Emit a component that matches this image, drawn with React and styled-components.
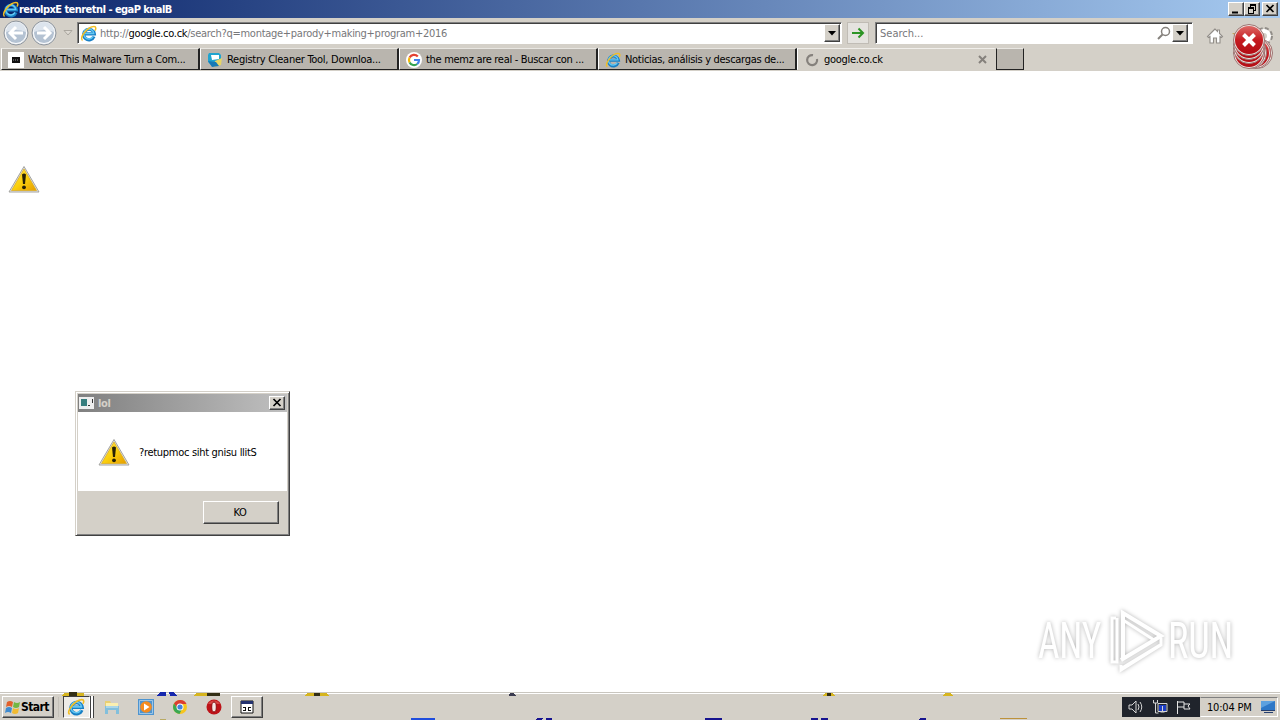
import React from "react";
import styled, { createGlobalStyle, css } from "styled-components";

const App = () => {
  return (
    <>
      <GlobalStyle />
      <Screen>
        <TitleBar>
          <IeLogo size={17} />
          <TitleText>rerolpxE tenretnI - egaP knalB</TitleText>
          <WindowButtons>
            <CaptionButton>
              <svg width="14" height="12"><path d="M3 9.5h6" stroke="#000" strokeWidth="2" /></svg>
            </CaptionButton>
            <CaptionButton>
              <svg width="14" height="12" fill="none" stroke="#000" shapeRendering="crispEdges">
                <path d="M5 2.5h6M5 1.5h6M5.5 2v3M10.5 2v5M9 7.5h2M3 5.5h6M3 4.5h6M3.5 5v5M8.5 5v5M3 10.5h6" />
              </svg>
            </CaptionButton>
            <CaptionButton $gap>
              <CloseGlyph />
            </CaptionButton>
          </WindowButtons>
        </TitleBar>

        <NavBar>
          <NavButtons>
            <NavArrow />
            <NavArrow forward />
            <svg width="10" height="8"><path d="M1 1.5h8L5 6z" fill="#ddd9d2" stroke="#aaa69f" /></svg>
          </NavButtons>
          <AddressField>
            <IeLogo size={17} />
            <Url>
              http://<b>google.co.ck</b>/search?q=montage+parody+making+program+2016
            </Url>
            <DropButton><DownGlyph /></DropButton>
          </AddressField>
          <GoButton>
            <svg width="14" height="12" fill="none" stroke="#2c9424" strokeWidth="2">
              <path d="M1 6h11M7.5 1.5L12 6l-4.500 4.500" />
            </svg>
          </GoButton>
          <SearchField>
            <SearchText>Search...</SearchText>
            <svg width="14" height="14" fill="none" stroke="#85817c">
              <circle cx="8.500" cy="5.500" r="4" strokeWidth="1.500" />
              <path d="M5.500 8.500L1 13" strokeWidth="2" />
            </svg>
            <DropButton><DownGlyph /></DropButton>
          </SearchField>
          <Tools>
            <svg width="18" height="18" fill="#fff" stroke="#918d88" strokeWidth="1.100">
              <path d="M9 2L1.500 9.500l1 1L4 9.500V16h3.500v-5h3v5H14V9.500l1.500 1 1-1-3-3V3h-2v1.500z" />
            </svg>
            <svg width="18" height="18" fill="#c5a55a"><path d="M9 1l2 5h6l-5 4 2 6-5-4-5 4 2-6-5-4h6z" /></svg>
            <svg width="18" height="18" fill="none">
              <circle cx="8" cy="9" r="6.500" stroke="#918d88" strokeWidth="5" strokeDasharray="3.200 1.900" />
              <circle cx="8" cy="9" r="5" stroke="#fff" strokeWidth="4" />
            </svg>
          </Tools>
        </NavBar>

        <TabBar>
          <Tab>
            <svg width="16" height="16"><path fill="#fff" d="M0 0h16v16H0z" /><path fill="#111" d="M4 5h8v6H4z" /><path d="M5 8h6" stroke="#999" strokeDasharray="1 1" /></svg>
            <TabText>Watch This Malware Turn a Com...</TabText>
          </Tab>
          <Tab>
            <svg width="16" height="16">
              <path d="M2 1h10l2 2v5l-2 5H4L1 10V3z" fill="#20a4cf" />
              <path d="M4 3h8v4L5 8z" fill="#fff" />
              <path d="M8 9l7-3-1 7-7 2z" fill="#e7d565" />
              <path d="M1 9l8 1 3 4-7 1z" fill="#1679b5" />
            </svg>
            <TabText $spacing={-0.27}>Registry Cleaner Tool, Downloa...</TabText>
          </Tab>
          <Tab>
            <svg width="16" height="16" fill="none" strokeWidth="2.200">
              <circle cx="8" cy="8" r="8" fill="#fff" />
              <path d="M11.800 4.500A5 5 0 0 0 3.600 5.600" stroke="#e34133" />
              <path d="M3.600 5.600a5 5 0 0 0 0 4.800" stroke="#f3b605" />
              <path d="M3.600 10.400a5 5 0 0 0 7.600 1.600" stroke="#32a350" />
              <path d="M11.200 12A5 5 0 0 0 13 8H8" stroke="#4081ec" />
            </svg>
            <TabText>the memz are real - Buscar con ...</TabText>
          </Tab>
          <Tab>
            <IeLogo size={16} />
            <TabText>Noticias, análisis y descargas de...</TabText>
          </Tab>
          <Tab $active>
            <svg width="16" height="16"><path d="M9 3.200A5 5 0 1 0 13 7" fill="none" stroke="#85817c" strokeWidth="2.200" /></svg>
            <TabText>google.co.ck</TabText>
            <svg width="9" height="9"><path d="M1 1l7 7M8 1L1 8" stroke="#85817c" strokeWidth="2" /></svg>
          </Tab>
          <NewTab />
        </TabBar>

        <Page />

        <Taskbar>
          <StartButton>
            <svg width="17" height="16">
              <path d="M3 3q3-2 6 0L8 8Q5 6 2 8z" fill="#e2602b" />
              <path d="M10 3q3 2 6 0l-1 5q-3 2-6 0z" fill="#73b743" />
              <path d="M2 9q3-2 6 0l-1 5q-3-2-6 0z" fill="#3f8bd0" />
              <path d="M9 9q3 2 6 0l-1 5q-3 2-6 0z" fill="#f2bb32" />
            </svg>
            Start
          </StartButton>
          <Grip />
          <TaskButton $pressed>
            <IeLogo size={18} />
            <Stack />
          </TaskButton>
          <QuickIcon>
            <svg width="18" height="18">
              <path d="M2 3h5l1 2h7v6H2z" fill="#e9cf71" />
              <path d="M3 5h12v4H3z" fill="#fbefb0" />
              <path d="M2 8h14v8h-3v-4H5v4H2z" fill="#82bfdc" />
              <path d="M3 9h12" stroke="#d3edf5" />
            </svg>
          </QuickIcon>
          <QuickIcon>
            <svg width="18" height="18">
              <path d="M1 1h16v16H1z" fill="#4d94d0" />
              <path d="M2.500 2.500h13v13h-13z" fill="none" stroke="#9dc5e6" />
              <circle cx="9" cy="9" r="5.800" fill="#f58b1f" />
              <path d="M7 5.500v7L12.500 9z" fill="#fff" />
            </svg>
          </QuickIcon>
          <QuickIcon>
            <svg width="16" height="16">
              <circle cx="8" cy="8" r="7" fill="#f6c51d" />
              <path d="M2 4.500A7 7 0 0 1 14.500 5H8L5 9z" fill="#db3e32" />
              <path d="M2 4.500A7 7 0 0 0 7.500 15L10 10H6z" fill="#3aa853" />
              <circle cx="8" cy="8" r="3.500" fill="#fff" />
              <circle cx="8" cy="8" r="2.600" fill="#4383dc" />
            </svg>
          </QuickIcon>
          <QuickIcon>
            <svg width="16" height="16">
              <circle cx="8" cy="8" r="7.500" fill="#bd1318" />
              <path d="M2 5a7 7 0 0 1 12 0z" fill="#e25c56" opacity=".7" />
              <ellipse cx="8" cy="8" rx="2.300" ry="5" fill="#f4e8e4" stroke="#8b0b0e" />
            </svg>
          </QuickIcon>
          <TaskButton>
            <svg width="14" height="14" fill="none" stroke="#111">
              <path d="M1 1h12v12H1z" fill="#fff" />
              <path d="M1 2.500h12" stroke="#23326f" strokeWidth="3" />
              <path d="M3 7.500h3M8 7.500h3M3 10.500h3M8 10.500h3M5.500 7v4M8.500 7v4" />
            </svg>
          </TaskButton>
          <Tray>
            <svg width="18" height="16" fill="none" stroke="#d5d5d5">
              <path d="M2 6h3l4-4v12L5 10H2zM11 5q2 3 0 6M13 3q3.500 5 0 10" />
            </svg>
            <svg width="18" height="16" fill="none" stroke="#d5d5d5">
              <path d="M2.500 1v3h4V1M4.500 4v10h3M7 4.500h9v8H7z" />
              <path d="M8 6h7v6H8z" fill="#1d3ec5" stroke="none" />
              <path d="M11.500 7v5M9.500 13h4" />
            </svg>
            <svg width="18" height="16" fill="none" stroke="#e5e5e5">
              <path d="M2.500 2v13M3 3h6v5H3M9 5h6l-2 2 2 3H9V8" />
            </svg>
          </Tray>
          <Clock>
            <span>10:04 PM</span>
            <svg width="16" height="14">
              <path d="M1 1h14v9H1z" fill="#2e78c7" />
              <path d="M1 1h14L1 8z" fill="#5da1df" />
              <path d="M1 10.500h14M4 12.500h9" stroke="#253f70" />
            </svg>
          </Clock>
        </Taskbar>

        <Floating $x={8} $y={164}><Warning /></Floating>

        <Dialog>
          <DialogTitle>
            <svg width="15" height="12">
              <path fill="#eee" d="M0 0h15v12H0z" /><path fill="#367d7d" d="M2 2h6v7H2z" />
              <path stroke="#333" d="M9 8.500h2M13.500 2v4" />
            </svg>
            <span>lol</span>
            <CaptionButton><CloseGlyph /></CaptionButton>
          </DialogTitle>
          <DialogBody>
            <Warning />
            <DialogText>?retupmoc siht gnisu llitS</DialogText>
          </DialogBody>
          <DialogFooter>
            <DialogButton>KO</DialogButton>
          </DialogFooter>
        </Dialog>

        <Floating $x={1230} $y={22}><ErrorStack /></Floating>
        <Floating $x={1030} $y={600}><Watermark /></Floating>
        <Floating $x={0} $y={691}><TopTrails /></Floating>
        <Floating $x={0} $y={716}><BottomTrails /></Floating>
      </Screen>
    </>
  );
};

const IeLogo = ({ size }) => (
  <svg width={size} height={size} viewBox="0 0 17 17" fill="none">
    <path d="M14 11.500A5.300 5.300 0 1 1 14.300 8.800H4.500" stroke="#187fc4" strokeWidth="3.200" />
    <path d="M13 11.500A5 5 0 1 1 13.700 8.400H5" stroke="#62c7f3" strokeWidth="1.500" />
    <path d="M2.500 15.500C-1.500 13 8 1.500 14 1.500c2.500 0 2 2.500 1 4" stroke="#f2be22" strokeWidth="1.500" />
  </svg>
);

const NavArrow = ({ forward }) => (
  <svg width="26" height="26" viewBox="0 0 26 26">
    <circle cx="13" cy="13" r="12" fill="#dfe3e8" stroke="#8f969e" />
    <circle cx="13" cy="13" r="10.500" fill="#b4c2d2" stroke="#fff" />
    <path d="M3 12a10 10 0 0 1 20 0q-10-4-20 0z" fill="#dce4ed" />
    <path
      d="M20 13H8M13 7l-6 6 6 6"
      fill="none"
      stroke="#fff"
      strokeWidth="3"
      transform={forward ? "rotate(180 13 13)" : undefined}
    />
  </svg>
);

const CloseGlyph = () => (
  <svg width="14" height="12"><path d="M3.500 2l7 7M10.500 2l-7 7" stroke="#000" strokeWidth="1.700" /></svg>
);

const DownGlyph = () => (
  <svg width="8" height="5"><path d="M0 0h8L4 4.500z" fill="#000" /></svg>
);

const Warning = () => (
  <svg width="32" height="32" viewBox="0 0 32 32">
    <defs>
      <linearGradient id="warn" x1="0" y1="0" x2="1" y2="1">
        <stop offset="0" stopColor="#ffe45a" />
        <stop offset=".5" stopColor="#fbd10d" />
        <stop offset="1" stopColor="#e59c00" />
      </linearGradient>
    </defs>
    <path d="M16 2.500L31 28H1z" fill="#e7e7e5" stroke="#a3a3a0" strokeLinejoin="round" />
    <path d="M16 5l12.500 21.500h-25z" fill="url(#warn)" stroke="#d8a716" strokeWidth=".7" />
    <path d="M14 10.500q2-2 4 0L17 20h-2z" fill="#262006" />
    <circle cx="16" cy="23.300" r="1.900" fill="#262006" />
  </svg>
);

const errorSpots = [[27, 31], [25, 31], [21, 31], [19, 31], [19, 26], [19, 22], [19, 18]];

const ErrorStack = () => (
  <svg width="50" height="50">
    <defs>
      <linearGradient id="err" x1="0" y1="0" x2="0" y2="1">
        <stop offset="0" stopColor="#dd6965" />
        <stop offset=".5" stopColor="#c51a20" />
        <stop offset="1" stopColor="#b30d15" />
      </linearGradient>
    </defs>
    {errorSpots.map(([x, y]) => (
      <g key={`${x}-${y}`}>
        <circle cx={x} cy={y} r="15.500" fill="#eee3df" stroke="#9c7472" />
        <circle cx={x} cy={y} r="14" fill="url(#err)" />
      </g>
    ))}
    <path d="M13.500 12.500l11 11M24.500 12.500l-11 11" stroke="#fff" strokeWidth="4" />
  </svg>
);

const Watermark = () => (
  <svg width="210" height="80">
    <g
      fill="#fff"
      fontFamily="Roboto, sans-serif"
      fontSize="50"
      style={{ filter: "drop-shadow(0 0 2px rgba(0, 0, 0, 0.3))" }}
    >
      <text x="8" y="58" textLength="63" lengthAdjust="spacingAndGlyphs">ANY</text>
      <text x="138" y="58" textLength="65" lengthAdjust="spacingAndGlyphs">RUN</text>
      <g fill="none" stroke="#fff" strokeWidth="4">
        <path d="M93 58V13l38 23-40 24" />
        <path d="M86 18h-4v44h5V18M92 68l38-23M91 65v5l40-25v-7" strokeWidth="3" />
        <path d="M93 20l31 20" strokeWidth="3" />
      </g>
    </g>
  </svg>
);

// Leftover slivers of the icons hidden behind the taskbar
const TopTrails = () => (
  <svg width="1020" height="6" shapeRendering="crispEdges">
    <path d="M64 2h20v3H62zM197 2h23v3h-27zM307 2h20l2 3h-24zM825 2h7l3 3h-12zM945 2h6l2 3h-10z" fill="#d6b51f" />
    <path d="M69 1h8v4h-8zM207 2h13v3h-13zM314 2h6v3h-6zM827 2h4v3h-4z" fill="#332f16" />
    <path d="M160 1h6v4h-9zM169 1h4l4 4h-7z" fill="#1628ad" />
    <path d="M510 2h4l2 3h-7z" fill="#3b3b50" />
  </svg>
);

const BottomTrails = () => (
  <svg width="1040" height="4" shapeRendering="crispEdges">
    <path d="M411 2h24v2h-24z" fill="#1f4ddd" />
    <path d="M537 2h6l-2 2h-6zM546 2h6v2h-6zM705 2h17v2h-17zM811 2h7v2h-7zM821 2h7v2h-7zM920 2h6v2h-7z" fill="#16138f" />
    <path d="M1000 2h27v1h-27z" fill="#bd923b" />
    <path d="M160 3h6v1h-6z" fill="#b9aa63" />
  </svg>
);

const GlobalStyle = createGlobalStyle`
  * {
    box-sizing: border-box;
  }

  body {
    margin: 0;
    overflow: hidden;
  }

  svg {
    display: block;
    flex: none;
  }
`;

const raised = css`
  background: #d4d0c8;
  border: 1px solid;
  border-color: #fff #404040 #404040 #fff;
  box-shadow: inset -1px -1px #808080;
`;

const sunken = css`
  background: #fff;
  border: 1px solid;
  border-color: #808080 #fff #fff #808080;
  box-shadow: inset 1px 1px #404040;
`;

const Screen = styled.div`
  position: relative;
  display: flex;
  flex-direction: column;
  width: 1280px;
  height: 720px;
  overflow: hidden;
  background: #fff;
  color: #000;
  font-family: "DejaVu Sans Condensed", "DejaVu Sans", sans-serif;
  font-stretch: condensed;
  font-size: 11px;
  letter-spacing: -0.3px;
  white-space: nowrap;
`;

const TitleBar = styled.div`
  display: flex;
  align-items: center;
  height: 18px;
  padding: 0 2px;
  background: linear-gradient(90deg, #0a246a, #a6caf0);
`;

const TitleText = styled.span`
  flex: 1;
  color: #fff;
  font-weight: bold;
  letter-spacing: -0.55px;
`;

const WindowButtons = styled.div`
  display: flex;
`;

const CaptionButton = styled.div`
  ${raised}
  width: 16px;
  height: 14px;
  margin-left: ${(props) => (props.$gap ? "2px" : "0")};
`;

const NavBar = styled.div`
  display: flex;
  align-items: center;
  height: 30px;
  background: #d4d0c8;
`;

const NavButtons = styled.div`
  display: flex;
  align-items: center;
  gap: 2px;
  width: 77px;
  padding-left: 3px;

  svg:last-child {
    margin-left: 4px;
  }
`;

const AddressField = styled.div`
  ${sunken}
  display: flex;
  align-items: center;
  width: 765px;
  height: 22px;
  padding: 2px 1px 2px 2px;
`;

const Url = styled.span`
  flex: 1;
  margin-left: 3px;
  color: #77777a;
  letter-spacing: -0.28px;

  b {
    color: #000;
    font-weight: normal;
  }
`;

const DropButton = styled.div`
  ${raised}
  display: flex;
  align-items: center;
  justify-content: center;
  width: 16px;
  height: 18px;
`;

const GoButton = styled.div`
  display: flex;
  align-items: center;
  justify-content: center;
  width: 22px;
  height: 22px;
  margin: 0 6px 0 5px;
  background: #e5e3df;
  border: 1px solid #c0bcb5;
`;

const SearchField = styled.div`
  ${sunken}
  display: flex;
  align-items: center;
  width: 318px;
  height: 22px;
  padding: 2px 4px;

  ${DropButton} {
    margin-left: 1px;
  }
`;

const SearchText = styled.span`
  flex: 1;
  color: #77777a;
  letter-spacing: 0;
`;

const Tools = styled.div`
  display: flex;
  gap: 7px;
  margin-left: 13px;
  padding-top: 5px;
`;

const TabBar = styled.div`
  display: flex;
  height: 23px;
  padding-left: 1px;
  background: #d4d0c8;
`;

const Tab = styled.div`
  display: flex;
  align-items: center;
  width: 199px;
  height: 22px;
  padding: 1px 7px 0 6px;
  background: ${(props) => (props.$active ? "#d4d0c8" : "#b9b5ae")};
  border: 1px solid;
  border-color: ${(props) => (props.$active ? "#f1efeb #d4d0c8 #d4d0c8 #fff" : "#e8e6e1 #222 #222 #fff")};
  border-right-width: 2px;
`;

const TabText = styled.span`
  flex: 1;
  margin-left: 4px;
  letter-spacing: ${(props) => props.$spacing ?? -0.3}px;
`;

const NewTab = styled.div`
  width: 28px;
  height: 22px;
  background: #b9b5ae;
  border: 1px solid #222;
  border-top-color: #e8e6e1;
`;

const Page = styled.div`
  flex: 1;
  background: #fff;
`;

const Taskbar = styled.div`
  display: flex;
  align-items: center;
  height: 28px;
  padding: 2px 2px 0;
  background: #d4d0c8;
  box-shadow: inset 0 1px #c9c6bf, inset 0 2px #fff;
`;

const StartButton = styled.div`
  ${raised}
  display: flex;
  align-items: center;
  width: 52px;
  height: 22px;
  padding-left: 1px;
  font-size: 12px;
  font-weight: bold;
  letter-spacing: -0.6px;
`;

const Grip = styled.div`
  width: 2px;
  height: 20px;
  margin: 0 3px 0 4px;
  border-left: 1px solid #c4c0b8;
`;

const TaskButton = styled.div`
  ${raised}
  display: flex;
  align-items: center;
  justify-content: center;
  width: 32px;
  height: 22px;

  ${(props) =>
    props.$pressed &&
    css`
      width: 27px;
      margin-right: 5px;
      background: #eeece8;
      border-color: #404040 #fff #fff #404040;
      box-shadow: 1px 0 #404040, 3px 0 #fff, 4px 0 #404040;
    `}
`;

const Stack = styled.div`
  width: 1px;
`;

const QuickIcon = styled.div`
  display: flex;
  align-items: center;
  justify-content: center;
  width: 34px;
  height: 22px;
`;

const Tray = styled.div`
  display: flex;
  align-items: center;
  gap: 6px;
  width: 78px;
  height: 20px;
  margin-left: auto;
  padding-left: 5px;
  background: #20242c;
`;

const Clock = styled.div`
  display: flex;
  align-items: center;
  justify-content: space-between;
  width: 78px;
  height: 20px;
  padding: 0 1px 0 6px;
  border: 1px solid;
  border-color: #808080 #fff #fff #d4d0c8;
  letter-spacing: -0.2px;
`;

const Floating = styled.div`
  position: absolute;
  left: ${(props) => props.$x}px;
  top: ${(props) => props.$y}px;
`;

const Dialog = styled.div`
  ${raised}
  position: absolute;
  left: 75px;
  top: 391px;
  display: flex;
  flex-direction: column;
  width: 215px;
  height: 145px;
  padding: 2px;
  border-color: #d4d0c8 #404040 #404040 #d4d0c8;
  box-shadow: inset 1px 1px #fff, inset -1px -1px #808080;
`;

const DialogTitle = styled.div`
  display: flex;
  align-items: center;
  height: 18px;
  padding: 0 2px 0 1px;
  background: linear-gradient(90deg, #808080, #c0c0c0);
  color: #d4d0c8;
  font-weight: bold;

  span {
    flex: 1;
    margin-left: 4px;
  }
`;

const DialogBody = styled.div`
  display: flex;
  align-items: center;
  height: 79px;
  padding: 2px 0 0 20px;
  background: #fff;
`;

const DialogText = styled.span`
  margin-left: 9px;
`;

const DialogFooter = styled.div`
  display: flex;
  justify-content: flex-end;
  padding: 10px 8px 0 0;
`;

const DialogButton = styled.div`
  ${raised}
  width: 76px;
  height: 23px;
  padding-right: 2px;
  line-height: 21px;
  text-align: center;
`;

export default App;
